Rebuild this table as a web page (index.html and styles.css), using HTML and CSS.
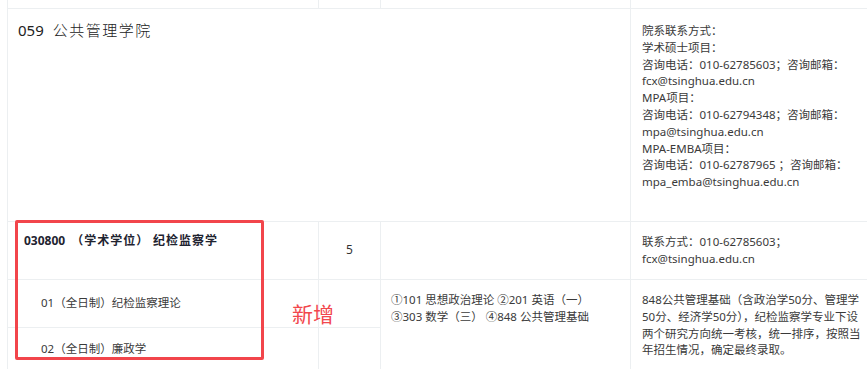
FILE: index.html
```html
<!DOCTYPE html>
<html lang="zh-CN">
<head>
<meta charset="utf-8">
<title>公共管理学院</title>
<link rel="stylesheet" href="styles.css">
</head>
<body>
<div class="page">
  <div class="grid">
    <div class="cell"></div>
    <div class="cell"></div>
    <div class="cell"></div>
    <div class="cell"></div>

    <div class="cell dept span3"><span class="code">059</span><span class="dept-name">公共管理学院</span></div>
    <div class="cell contact top">院系联系方式：<br>学术硕士项目：<br>咨询电话：010-62785603；咨询邮箱：<br>fcx@tsinghua.edu.cn<br>MPA项目：<br>咨询电话：010-62794348；咨询邮箱：<br>mpa@tsinghua.edu.cn<br>MPA-EMBA项目：<br>咨询电话：010-62787965 ；咨询邮箱：<br>mpa_emba@tsinghua.edu.cn</div>

    <div class="cell major"><span class="code">030800</span><span class="major-name">（学术学位） 纪检监察学</span></div>
    <div class="cell num">5</div>
    <div class="cell"></div>
    <div class="cell contact mid">联系方式：010-62785603；<br>fcx@tsinghua.edu.cn</div>

    <div class="cell dir">01（全日制）纪检监察理论</div>
    <div class="cell"></div>
    <div class="cell exam rows2">①101 思想政治理论 ②201 英语（一）<br>③303 数学（三） ④848 公共管理基础</div>
    <div class="cell note rows2">848公共管理基础（含政治学50分、管理学<br>50分、经济学50分），纪检监察学专业下设<br>两个研究方向统一考核，统一排序，按照当<br>年招生情况，确定最终录取。</div>

    <div class="cell dir">02（全日制）廉政学</div>
    <div class="cell"></div>
  </div>
  <div class="mark-box"></div>
  <div class="mark-label">新增</div>
</div>
</body>
</html>
```

FILE: styles.css
```css
html, body {
  margin: 0;
  padding: 0;
  background: #ffffff;
  overflow: hidden;
}

body {
  width: 867px;
  height: 369px;
  font-family: "Noto Sans", "Noto Sans CJK SC", sans-serif;
  font-size: 11.5px;
  color: #3a3a3a;
}

.page {
  position: relative;
  width: 867px;
  height: 369px;
}

.grid {
  margin-left: 7px;
  padding-left: 1px;
  display: grid;
  grid-template-columns: 310px 61px 249px 1fr;
  grid-template-rows: 8px 212px 57px 47px 42px;
  gap: 1px;
  background: #eceff1;
}

.cell {
  background: #ffffff;
  line-height: 16.8px;
}

.span3 {
  grid-column: 1 / 4;
}

.rows2 {
  grid-row: span 2;
}

.dept {
  padding: 11px 10px 0 10px;
  font-size: 15px;
  line-height: 20px;
  color: #222;
}

.dept .code {
  margin-right: 9px;
}

.dept-name {
  font-family: "Noto Sans CJK SC", sans-serif;
  letter-spacing: 1.5px;
  font-weight: 300;
}

.contact.top {
  padding: 14px 8px 0 11px;
}

.contact.mid {
  padding-left: 11px;
  display: flex;
  flex-direction: column;
  justify-content: center;
}

.major {
  padding: 10px 8px 0 16px;
  font-size: 12px;
  font-weight: 700;
  color: #1e2330;
}

.major .code {
  margin-right: 6px;
}

.major-name {
  font-family: "Noto Sans CJK SC", sans-serif;
  letter-spacing: 1px;
}

.num {
  display: flex;
  align-items: center;
  justify-content: center;
  font-size: 12px;
  color: #333;
}

.dir {
  display: flex;
  align-items: center;
  padding-left: 33px;
}

.exam {
  padding: 12px 6px 0 10px;
}

.note {
  padding: 12px 0 0 11px;
  white-space: nowrap;
}

.mark-box {
  position: absolute;
  left: 15px;
  top: 220px;
  width: 243px;
  height: 134px;
  border: 3px solid #f2454b;
  border-radius: 2px;
}

.mark-label {
  position: absolute;
  left: 292px;
  top: 299px;
  font-family: "Noto Sans CJK SC", sans-serif;
  font-size: 21px;
  line-height: 28px;
  color: #f2474d;
}
```
